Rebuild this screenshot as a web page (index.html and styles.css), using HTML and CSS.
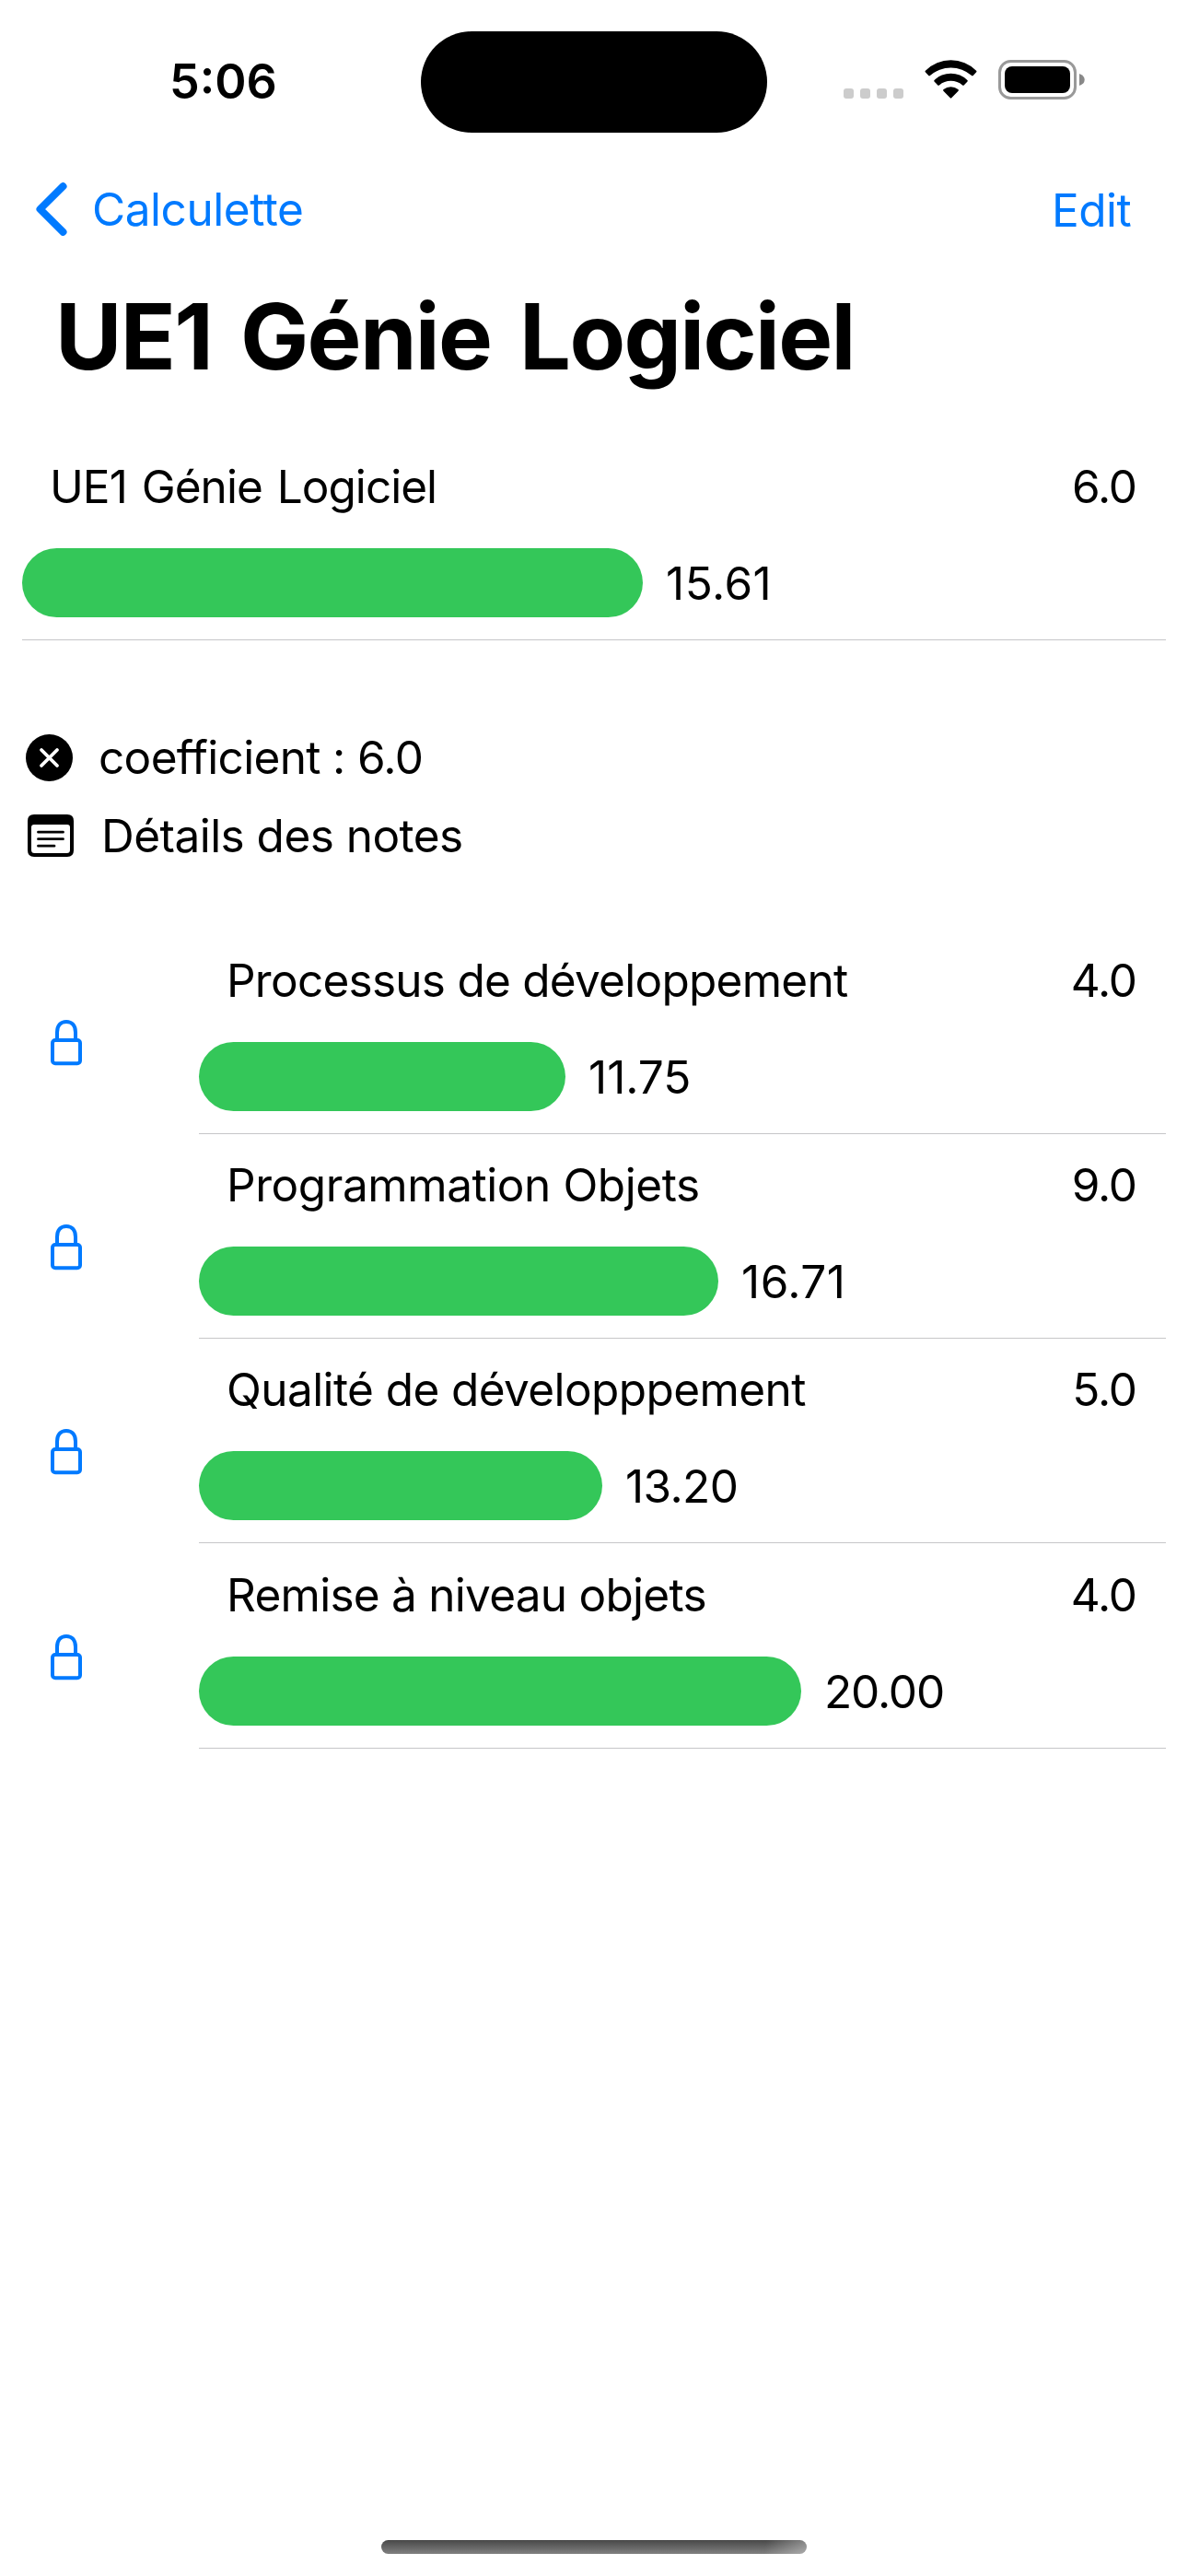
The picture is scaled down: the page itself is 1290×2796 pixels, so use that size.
FILE: index.html
```html
<!DOCTYPE html>
<html lang="fr">
<head>
<meta charset="utf-8">
<title>UE1 Génie Logiciel</title>
<link rel="stylesheet" href="styles.css">
</head>
<body>
<svg class="defs" aria-hidden="true">
  <symbol id="lock" viewBox="0 0 34 50">
    <path d="M7 21V13.500C7 6 11 2 17 2s10 4 10 11.500V21" />
    <rect x="2" y="22" width="30" height="25.200" rx="3" />
  </symbol>
</svg>
<div class="screen">
  <header class="status">
    <div class="time">5:06</div>
    <div class="island"></div>
    <div class="indicators">
      <div class="dots"><i></i><i></i><i></i><i></i></div>
      <svg class="wifi" viewBox="0 0 57 42">
        <path d="M.8 13.300Q.1 12.500.9 11.800A39 39 0 0 1 56.100 11.800Q56.900 12.500 56.200 13.300L52.700 17Q52 17.800 51.100 17A34.300 34.300 0 0 0 5.900 17Q5 17.800 4.300 17Z" />
        <path d="M10.500 23.600Q9.800 22.800 10.600 22A25.500 25.500 0 0 1 46.400 22Q47.200 22.800 46.500 23.600L42.700 27.400Q42 28.200 41.100 27.400A19.700 19.700 0 0 0 15.900 27.400Q15 28.200 14.300 27.400Z" />
        <path d="M20.400 33.700Q19.600 32.800 20.600 32A12.500 12.500 0 0 1 36.400 32Q37.400 32.800 36.600 33.700L29.200 41.300Q28.500 42 27.800 41.300Z" />
      </svg>
      <svg class="battery" viewBox="0 0 94 43">
        <rect x="1.500" y="1.500" width="82" height="40" rx="12" fill="none" stroke="#999" stroke-width="3" />
        <rect x="7" y="7" width="71" height="29" rx="8" />
        <path d="M88 15Q93.700 17 93.700 21.500T88 28Z" fill="#888" />
      </svg>
    </div>
  </header>

  <nav class="nav">
    <a class="back">
      <svg class="chevron" viewBox="0 0 34 58"><path d="M29.500 4.200L4.500 29L29.500 53.800" /></svg>
      <span>Calculette</span>
    </a>
    <a class="edit">Edit</a>
  </nav>

  <h1>UE1 Génie Logiciel</h1>

  <section class="entry summary">
    <div class="head"><span class="unit">UE1 Génie Logiciel</span><span class="coef">6.0</span></div>
    <div class="score"><div class="bar" style="width:674px"></div><span class="spread">15.61</span></div>
  </section>

  <section class="info">
    <div class="line coefficient">
      <svg class="info-icon" viewBox="0 0 51 51">
        <circle cx="25.500" cy="25.500" r="25.500" />
        <path d="M17 17L34 34M34 17L17 34" fill="none" stroke="#fff" stroke-width="3.800" stroke-linecap="round" />
      </svg>
      <span>coefficient : 6.0</span>
    </div>
    <div class="line details">
      <svg class="note-icon" viewBox="0 0 50 46">
        <path fill-rule="evenodd" d="M7 0H43Q50 0 50 7V39Q50 46 43 46H7Q0 46 0 39V7Q0 0 7 0ZM7 11Q4 11 4 14V38.500Q4 42 7.500 42H42.500Q46 42 46 38.500V14Q46 11 43 11Z" />
        <path d="M11.500 19.200H38.500M11.500 26.700H38.500M11.500 34.200H29" fill="none" stroke="#000" stroke-width="2.800" stroke-linecap="round" />
      </svg>
      <span>Détails des notes</span>
    </div>
  </section>

  <main class="list">
    <div class="row">
      <svg class="lock"><use href="#lock" /></svg>
      <section class="entry">
        <div class="head"><span class="tight">Processus de développement</span><span class="coef">4.0</span></div>
        <div class="score"><div class="bar" style="width:398px"></div><span class="even">11.75</span></div>
      </section>
    </div>
    <div class="row">
      <svg class="lock"><use href="#lock" /></svg>
      <section class="entry">
        <div class="head"><span class="loose">Programmation Objets</span><span class="coef">9.0</span></div>
        <div class="score"><div class="bar" style="width:564px"></div><span class="spread">16.71</span></div>
      </section>
    </div>
    <div class="row">
      <svg class="lock"><use href="#lock" /></svg>
      <section class="entry">
        <div class="head"><span>Qualité de développpement</span><span class="coef">5.0</span></div>
        <div class="score"><div class="bar" style="width:438px"></div><span>13.20</span></div>
      </section>
    </div>
    <div class="row">
      <svg class="lock"><use href="#lock" /></svg>
      <section class="entry">
        <div class="head"><span class="tight">Remise à niveau objets</span><span class="coef">4.0</span></div>
        <div class="score"><div class="bar" style="width:654px"></div><span class="coef">20.00</span></div>
      </section>
    </div>
  </main>

  <footer class="home"></footer>
</div>
</body>
</html>
```
FILE: styles.css
```css
* { box-sizing: border-box; }

body {
  margin: 0;
  background: #fff;
  color: #000;
  font: 400 49.5px/60px Inter, "Liberation Sans", sans-serif;
  letter-spacing: -0.59px;
}

svg { display: block; flex: none; }
.defs { width: 0; height: 0; position: absolute; }

.screen {
  width: 1290px;
  height: 2796px;
  display: flex;
  flex-direction: column;
  overflow: hidden;
}

/* Status bar */
.status {
  height: 177px;
  display: grid;
  grid-template-columns: 457px 376px 457px;
  padding-top: 34px;
  align-items: start;
}
.time {
  padding: 25px 0 0 184px;
  font-size: 52px;
  font-weight: 600;
  letter-spacing: 0;
}
.island { height: 110px; border-radius: 55px; background: #000; }
.indicators { display: flex; padding: 31px 0 0 83px; }
.dots { display: flex; gap: 7px; width: 88px; padding-top: 31px; }
.dots i { width: 11px; height: 11px; border-radius: 3px; background: #ccc; }
.wifi { width: 57px; height: 42px; }
.battery { width: 94px; height: 43px; margin-left: 23px; }

/* Navigation */
.nav {
  height: 132px;
  display: flex;
  justify-content: space-between;
  align-items: flex-start;
  padding: 20px 62px 0 39px;
  color: #007aff;
}
.back { display: flex; gap: 27px; letter-spacing: -0.45px; }
.chevron { width: 34px; height: 58px; margin-top: 1px; }
.chevron path {
  fill: none;
  stroke: #007aff;
  stroke-width: 8;
  stroke-linecap: round;
  stroke-linejoin: round;
}
.edit { padding-top: 1px; }

h1 {
  margin: 0;
  height: 164px;
  padding-left: 60px;
  font-size: 99px;
  font-weight: 700;
  line-height: 112px;
  letter-spacing: -1.68px;
  word-spacing: 9px;
}

/* Result with its bar */
.entry {
  flex: 1;
  height: 222px;
  margin-right: 24px;
  padding-top: 25px;
  border-bottom: 1px solid #c6c6c8;
}
.summary { flex: none; margin-left: 24px; }
.head {
  display: flex;
  justify-content: space-between;
  padding: 0 32px 0 30px;
  margin-bottom: 37px;
}
.unit { letter-spacing: -0.97px; word-spacing: 3px; }
.coef { letter-spacing: -1.1px; }
.score { display: flex; align-items: center; gap: 25px; height: 75px; }
.bar { height: 75px; border-radius: 37.5px; background: #34c759; }
.tight { letter-spacing: -0.74px; }
.loose { letter-spacing: -0.43px; }
.even { letter-spacing: 0; }
.spread { letter-spacing: 0.5px; }

/* Coefficient and details lines */
.info { height: 314px; padding: 97px 0 0 28px; }
.line { display: flex; height: 85px; align-items: flex-start; }
.info-icon { width: 51px; height: 51px; margin: 5px 28px 0 0; }
.note-icon { width: 50px; height: 46px; margin: 7px 30px 0 2px; }
.coefficient { letter-spacing: -0.66px; font-variant-ligatures: none; }
.details { letter-spacing: -0.53px; }

/* Modules */
.row { display: flex; height: 222px; }
.row:last-child, .row:last-child .entry { height: 223px; }
.row:last-child .entry { padding-top: 26px; }
.row:last-child .lock { margin-top: 99px; }
.lock { width: 34px; height: 50px; margin: 98px 127px 0 55px; }
#lock path, #lock rect { fill: none; stroke: #007aff; stroke-width: 4; }

.home {
  width: 462px;
  height: 15px;
  margin: auto auto 24px 414px;
  border-radius: 7.5px;
  background:
    linear-gradient(100deg, transparent 90%, rgba(255, 255, 255, .35) 100%),
    linear-gradient(#484848, #808080);
}
```
